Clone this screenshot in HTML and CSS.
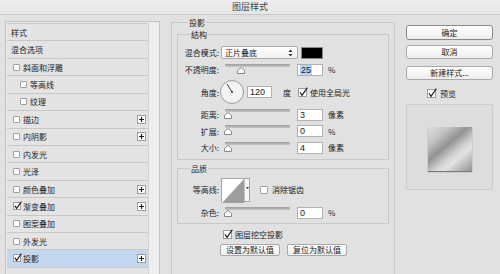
FILE: index.html
```html
<!DOCTYPE html>
<html lang="zh">
<head>
<meta charset="utf-8">
<title>图层样式</title>
<link rel="stylesheet" href="styles.css">
</head>
<body>
<div class="titlebar">图层样式</div>
<div class="main">
  <div class="left">
    <div class="list">
      <div class="row head">样式</div>
      <div class="row head">混合选项</div>
      <div class="row"><span class="cb"></span>斜面和浮雕</div>
      <div class="row sub"><span class="cb"></span>等高线</div>
      <div class="row sub"><span class="cb"></span>纹理</div>
      <div class="row"><span class="cb"></span>描边<svg class="plus" width="9" height="9" viewBox="0 0 9 9"><rect x="0.5" y="0.5" width="8" height="8" fill="#fff" stroke="#9c9c9c"/><path d="M4.5 2v5M2 4.5h5" stroke="#222" stroke-width="1.2"/></svg></div>
      <div class="row"><span class="cb"></span>内阴影<svg class="plus" width="9" height="9" viewBox="0 0 9 9"><rect x="0.5" y="0.5" width="8" height="8" fill="#fff" stroke="#9c9c9c"/><path d="M4.5 2v5M2 4.5h5" stroke="#222" stroke-width="1.2"/></svg></div>
      <div class="row"><span class="cb"></span>内发光</div>
      <div class="row"><span class="cb"></span>光泽</div>
      <div class="row"><span class="cb"></span>颜色叠加<svg class="plus" width="9" height="9" viewBox="0 0 9 9"><rect x="0.5" y="0.5" width="8" height="8" fill="#fff" stroke="#9c9c9c"/><path d="M4.5 2v5M2 4.5h5" stroke="#222" stroke-width="1.2"/></svg></div>
      <div class="row"><svg class="ck" width="9" height="9" viewBox="0 0 9 9"><rect x="0.5" y="1.5" width="7" height="7" fill="#fff" stroke="#9c9c9c"/><path d="M1.8 4.6 3.6 7.4 8.4 0.6" fill="none" stroke="#222" stroke-width="1.1"/></svg>渐变叠加<svg class="plus" width="9" height="9" viewBox="0 0 9 9"><rect x="0.5" y="0.5" width="8" height="8" fill="#fff" stroke="#9c9c9c"/><path d="M4.5 2v5M2 4.5h5" stroke="#222" stroke-width="1.2"/></svg></div>
      <div class="row"><span class="cb"></span>图案叠加</div>
      <div class="row"><span class="cb"></span>外发光</div>
      <div class="row active"><svg class="ck" width="9" height="9" viewBox="0 0 9 9"><rect x="0.5" y="1.5" width="7" height="7" fill="#fff" stroke="#9c9c9c"/><path d="M1.8 4.6 3.6 7.4 8.4 0.6" fill="none" stroke="#222" stroke-width="1.1"/></svg>投影<svg class="plus" width="9" height="9" viewBox="0 0 9 9"><rect x="0.5" y="0.5" width="8" height="8" fill="#fff" stroke="#9c9c9c"/><path d="M4.5 2v5M2 4.5h5" stroke="#222" stroke-width="1.2"/></svg></div>
      <div class="row"></div>
    </div>
    <div class="strip"></div>
  </div>

  <div class="middle">
    <fieldset class="outer">
      <legend class="legend-outer">投影</legend>
      <fieldset class="group structure">
        <legend>结构</legend>
        <div class="frow blendrow">
          <span class="lbl">混合模式:</span>
          <div class="select"><span>正片叠底</span><svg width="5" height="8" viewBox="0 0 5 8"><path d="M2.5 0.5 4.5 3H0.5Z M2.5 7.5 4.5 5H0.5Z" fill="#333"/></svg></div>
          <span class="swatch"></span>
        </div>
        <div class="frow">
          <span class="lbl">不透明度:</span>
          <div class="slider"><div class="track"></div><svg class="thumb" style="left:12px" width="8" height="7" viewBox="0 0 8 7"><path d="M0.5 6.5V3.5L4 0.5 7.5 3.5V6.5Z" fill="#fff" stroke="#888"/></svg></div>
          <div class="num"><span class="sel">25</span></div>
          <span class="unit">%</span>
        </div>
        <div class="frow dialrow">
          <span class="lbl">角度:</span>
          <svg class="dial" width="24" height="24" viewBox="0 0 24 24"><circle cx="12" cy="12" r="11.5" fill="#f3f3f3" stroke="#9a9a9a"/><path d="M12 12 7 4" stroke="#333" stroke-width="0.9"/><circle cx="12" cy="12" r="1" fill="#333"/></svg>
          <div class="num angle">120</div>
          <span class="deg">度</span>
          <svg class="ck big" width="10" height="10" viewBox="0 0 10 10"><rect x="0.5" y="1.5" width="8" height="8" fill="#fff" stroke="#9c9c9c"/><path d="M2 5.2 4 8.4 9.4 0.6" fill="none" stroke="#222" stroke-width="1.2"/></svg>
          <span class="cbl">使用全局光</span>
        </div>
        <div class="frow">
          <span class="lbl">距离:</span>
          <div class="slider"><div class="track"></div><svg class="thumb" style="left:-1px" width="8" height="7" viewBox="0 0 8 7"><path d="M0.5 6.5V3.5L4 0.5 7.5 3.5V6.5Z" fill="#fff" stroke="#888"/></svg></div>
          <div class="num">3</div>
          <span class="unit">像素</span>
        </div>
        <div class="frow">
          <span class="lbl">扩展:</span>
          <div class="slider"><div class="track"></div><svg class="thumb" style="left:-1px" width="8" height="7" viewBox="0 0 8 7"><path d="M0.5 6.5V3.5L4 0.5 7.5 3.5V6.5Z" fill="#fff" stroke="#888"/></svg></div>
          <div class="num">0</div>
          <span class="unit">%</span>
        </div>
        <div class="frow">
          <span class="lbl">大小:</span>
          <div class="slider"><div class="track"></div><svg class="thumb" style="left:-1px" width="8" height="7" viewBox="0 0 8 7"><path d="M0.5 6.5V3.5L4 0.5 7.5 3.5V6.5Z" fill="#fff" stroke="#888"/></svg></div>
          <div class="num">4</div>
          <span class="unit">像素</span>
        </div>
      </fieldset>

      <fieldset class="group quality">
        <legend>品质</legend>
        <div class="frow contourrow">
          <span class="lbl">等高线:</span>
          <div class="contour">
            <svg width="22" height="24" viewBox="0 0 22 24"><rect x="0" y="0" width="22" height="24" fill="#fff"/><path d="M0 24 22 0V24Z" fill="#9e9e9e"/></svg>
            <div class="carrow"><svg width="3" height="2" viewBox="0 0 3 2"><path d="M0 0H3L1.5 2Z" fill="#333"/></svg></div>
          </div>
          <span class="cb mid"></span>
          <span class="cbl">消除锯齿</span>
        </div>
        <div class="frow">
          <span class="lbl">杂色:</span>
          <div class="slider"><div class="track"></div><svg class="thumb" style="left:-1px" width="8" height="7" viewBox="0 0 8 7"><path d="M0.5 6.5V3.5L4 0.5 7.5 3.5V6.5Z" fill="#fff" stroke="#888"/></svg></div>
          <div class="num">0</div>
          <span class="unit">%</span>
        </div>
      </fieldset>

      <div class="knock">
        <svg class="ck big" width="10" height="10" viewBox="0 0 10 10"><rect x="0.5" y="1.5" width="8" height="8" fill="#fff" stroke="#9c9c9c"/><path d="M2 5.2 4 8.4 9.4 0.6" fill="none" stroke="#222" stroke-width="1.2"/></svg>
        <span class="cbl">图层挖空投影</span>
      </div>
      <div class="defaults">
        <button class="btn small">设置为默认值</button>
        <button class="btn small">复位为默认值</button>
      </div>
    </fieldset>
  </div>

  <div class="right">
    <button class="btn rb ok">确定</button>
    <button class="btn rb cancel">取消</button>
    <button class="btn rb newstyle">新建样式...</button>
    <div class="preview-row">
      <svg class="ck big" width="10" height="10" viewBox="0 0 10 10"><rect x="0.5" y="1.5" width="8" height="8" fill="#fff" stroke="#9c9c9c"/><path d="M2 5.2 4 8.4 9.4 0.6" fill="none" stroke="#222" stroke-width="1.2"/></svg>
      <span class="cbl">预览</span>
    </div>
    <div class="preview">
      <div class="swatch-preview"></div>
    </div>
  </div>
</div>
</body>
</html>
```

FILE: styles.css
```css
* { box-sizing: border-box; margin: 0; padding: 0; }
html, body { width: 500px; height: 274px; overflow: hidden; }
body {
  background: #e1e1e1;
  font-family: "Noto Sans CJK SC", "Noto Sans", sans-serif;
  font-size: 8px;
  color: #1c1c1c;
}
.titlebar {
  height: 15px;
  line-height: 14px;
  text-align: center;
  font-size: 9px;
  color: #444;
  background: linear-gradient(#eeeeee, #e5e5e5);
  border-bottom: 1px solid #c9c9c9;
}
.main { display: flex; align-items: flex-start; padding-top: 6px; }

/* left list */
.left {
  margin-left: 5px;
  width: 155px;
  height: 260px;
  border: 1px solid #c3c3c3;
  border-bottom: 0;
  padding: 1px 0 0 1px;
  display: flex;
  background: #ebebeb;
}
.list { width: 141px; border-top: 1px solid #c8c8c8; }
.row {
  height: 17.43px;
  display: flex;
  align-items: center;
  padding-left: 6px;
  border-bottom: 1px solid #c8c8c8;
  background: #e4e4e4;
  white-space: nowrap;
}
.row.head { padding-left: 4px; }
.row.sub { padding-left: 13px; }
.row.active { background: #c3d7ef; }
.cb {
  display: inline-block;
  width: 7px;
  height: 7px;
  border: 1px solid #a0a0a0;
  background: #fff;
  border-radius: 1px;
  margin-right: 3px;
}
.ck { margin-right: 1px; margin-top: -2px; }
.plus { margin-left: auto; margin-right: 2px; }
.strip { flex: 1; border-left: 1px solid #d2d2d2; background: #eeeeee; }

/* middle */
.middle { margin-left: 11px; margin-top: -3px; width: 224px; }
fieldset { min-width: 0; }
.outer {
  height: 263px;
  border: 1px solid #c8c8c8;
  border-bottom: 0;
  padding: 0 5px;
}
legend { font-size: 8px; line-height: 9px; padding: 0 1px; color: #1c1c1c; }
.legend-outer { margin-left: 11px; }
.group { border: 1px solid #c8c8c8; }
.group legend { margin-left: 12px; }
.structure { display: flex; flex-direction: column; gap: 4.6px; padding: 7px 0 5px; margin-top: 3px; }
.quality { display: flex; flex-direction: column; gap: 5px; padding: 5px 0 4px; margin-top: 4px; }
.frow { display: flex; align-items: center; height: 12px; white-space: nowrap; }
.frow.blendrow { height: 13px; }
.frow.dialrow, .frow.contourrow { height: 24px; }
.lbl { width: 41px; text-align: right; flex: none; }

.select {
  margin-left: 2px;
  width: 77px;
  height: 13px;
  border: 1px solid #ababab;
  border-radius: 2px;
  background: linear-gradient(#ffffff, #f1f1f1);
  display: flex;
  align-items: center;
  justify-content: space-between;
  padding: 0 4px 0 3px;
}
.swatch {
  margin-left: 3px;
  width: 22px;
  height: 12px;
  background: #000;
  border: 1px solid #8a8a8a;
}
.slider { position: relative; margin-left: 6px; width: 65px; height: 12px; flex: none; }
.track {
  height: 3px;
  border-radius: 1px;
  background: linear-gradient(#9d9d9d, #c6c6c6);
}
.thumb { position: absolute; top: 3px; }
.num {
  margin-left: 7px;
  width: 26px;
  height: 12px;
  background: #fff;
  border: 1px solid #b2b2b2;
  font-family: "Liberation Sans", Arial, sans-serif;
  font-size: 9px;
  line-height: 10px;
  padding-left: 2px;
  flex: none;
}
.sel { background: #b5d3f6; padding: 0 1px; }
.unit { margin-left: 5px; }
.dial { margin-left: 1px; flex: none; }
.num.angle { margin-left: 3px; width: 25px; }
.deg { margin-left: 11px; }
.ck.big { margin: 0; flex: none; }
.dialrow .ck.big { margin-left: 7px; }
.cbl { margin-left: 2px; }

.contour { margin-left: 2px; display: flex; height: 24px; border: 1px solid #a5a5a5; }
.contour svg { display: block; }
.carrow {
  width: 5px;
  border-left: 1px solid #c4c4c4;
  background: #f6f6f6;
  display: flex;
  justify-content: center;
  padding-top: 8px;
}
.cb.mid { width: 8px; height: 8px; margin: 0 0 0 10px; }
.contourrow .cbl { margin-left: 4px; }

.knock { display: flex; align-items: center; margin: 6px 0 0 46px; height: 9px; }
.defaults { display: flex; gap: 7px; margin: 5px 0 0 43px; }
.btn {
  font-family: "Noto Sans CJK SC", "Noto Sans", sans-serif;
  font-size: 8px;
  color: #1c1c1c;
  background: linear-gradient(#ffffff, #ededed);
  border: 1px solid #a9a9a9;
  border-radius: 2px;
}
.btn.small { width: 60px; height: 12px; line-height: 10px; }

/* right */
.right { margin-left: 11px; width: 87px; display: flex; flex-direction: column; }
.rb { height: 14px; line-height: 12px; border-radius: 3px; }
.ok { margin-top: 4px; height: 15px; border-color: #8a8a8a; }
.cancel { margin-top: 5px; }
.newstyle { margin-top: 7px; }
.preview-row { display: flex; align-items: center; height: 10px; margin-top: 8px; padding-left: 21px; }
.preview-row .cbl { margin-left: 3px; }
.preview {
  margin-top: 6px;
  height: 86px;
  border: 1px solid #cdcdcd;
  background: #dddddd;
  padding: 22px 0 0 21px;
}
.swatch-preview {
  width: 44px;
  height: 44px;
  background: linear-gradient(140deg, #dedede 0%, #c4c4c4 22%, #929292 42%, #d2d2d2 60%, #e2e2e2 70%, #9c9c9c 96%);
  box-shadow: 0 1px 1px rgba(0,0,0,0.45);
}
```
